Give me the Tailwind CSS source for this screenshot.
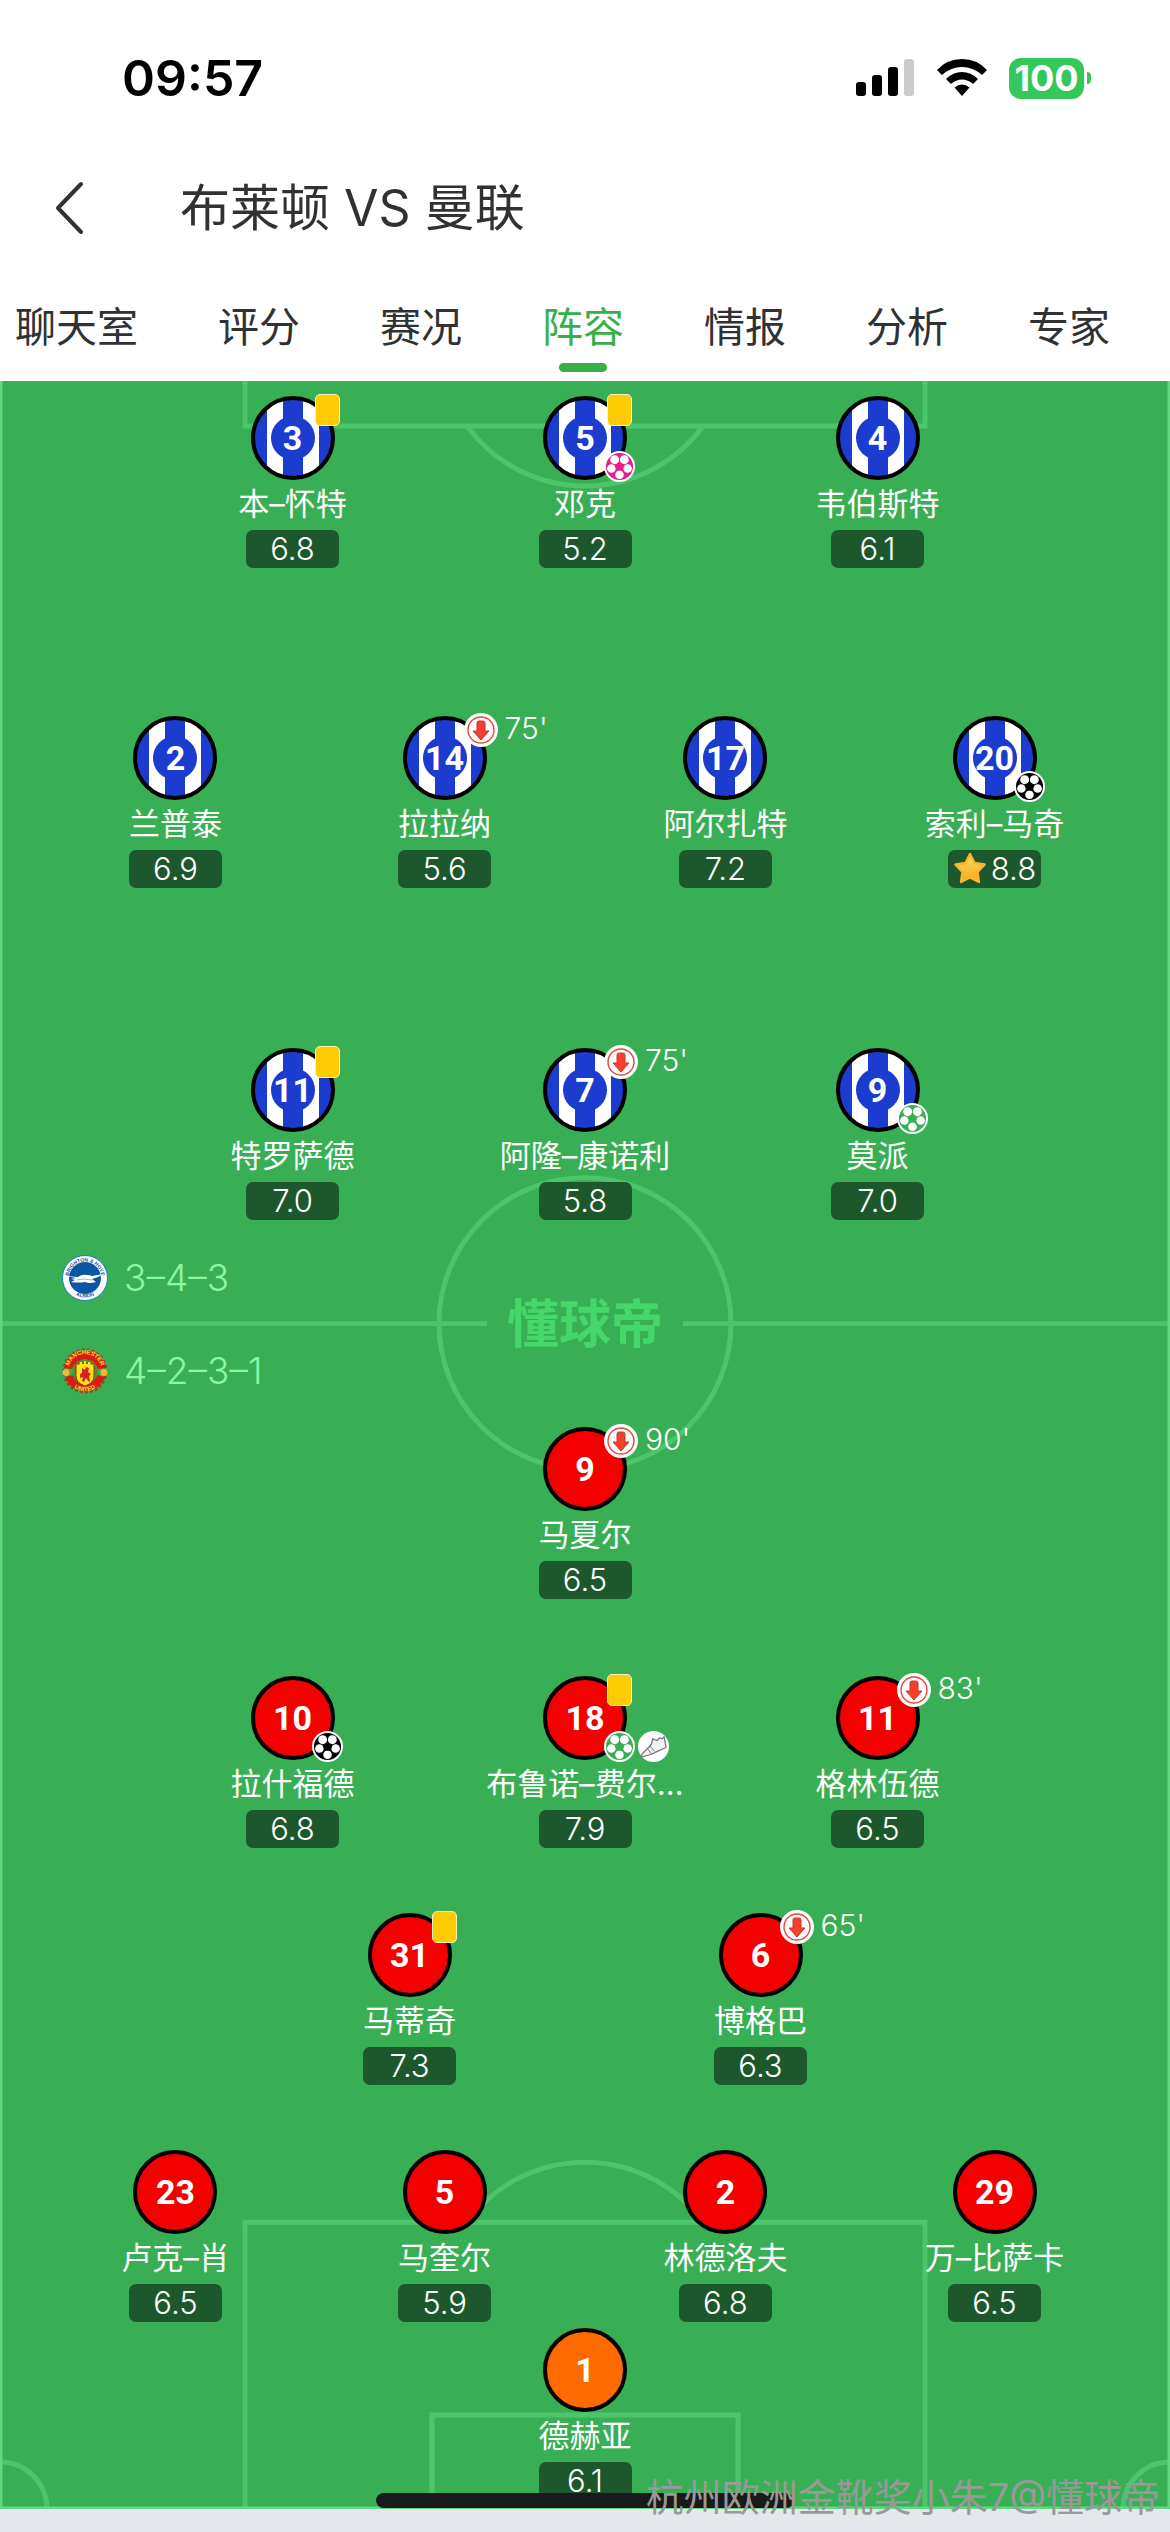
<!DOCTYPE html>
<html lang="zh-CN">
<head>
    <meta charset="UTF-8">
    <meta name="viewport" content="width=device-width, initial-scale=1.0">
    <title>布莱顿 VS 曼联</title>
    <script src="https://cdn.jsdelivr.net/npm/@tailwindcss/browser@4"></script>
</head>
<body class="relative min-h-screen flex flex-col bg-[#e4e7eb] font-['Inter','Noto_Sans_CJK_SC',sans-serif] text-[#303133]">
    <!-- icons shared by the players -->
    <svg class="absolute w-0 h-0">
        <defs>
            <linearGradient id="gold" x1="0" y1="0" x2="0" y2="1">
                <stop offset="0" stop-color="#ffe05c"/>
                <stop offset="1" stop-color="#f9a61d"/>
            </linearGradient>
        </defs>
        <symbol id="ball" viewBox="0 0 32 32">
            <circle cx="16" cy="16" r="15" fill="currentColor" stroke="#fff" stroke-width="2"/>
            <g fill="#fff">
                <circle cx="11" cy="9" r="4.6"/>
                <circle cx="21" cy="9" r="4.6"/>
                <circle cx="24.4" cy="18" r="4.4"/>
                <circle cx="7.6" cy="18" r="4.4"/>
                <circle cx="16" cy="24.6" r="4.4"/>
            </g>
            <path d="M16 11.5l4.6 3.4-1.8 5.3h-5.6l-1.8-5.3z" fill="currentColor"/>
        </symbol>
        <symbol id="boot" viewBox="0 0 32 32">
            <circle cx="16" cy="16" r="16" fill="#fff"/>
            <path d="M15 8l5 2 2-3 3 1 2-2 2 11-9 4-6 3-11 3q0-2 2-4l7-7q3-3 3-8z" fill="#f3f3f3" stroke="#77777c" stroke-width="1.3" stroke-linejoin="round"/>
            <path d="M9 17l5 7M12 15l5 6" fill="none" stroke="#77777c" stroke-width="1"/>
        </symbol>
        <symbol id="off" viewBox="0 0 34 34">
            <circle cx="17" cy="17" r="17" fill="#fff"/>
            <circle cx="17" cy="17" r="13" fill="none" stroke="#e34a3c" stroke-width="1.4"/>
            <path d="M13 10q0-2 2-2h4q2 0 2 2v8h4l-8 9-8-9h4z" fill="#f6402c" stroke="#c9372a" stroke-width="1" stroke-linejoin="round"/>
        </symbol>
        <symbol id="star" viewBox="0 0 34 34">
            <path d="M17 3l4.500 9 10 1.600-7 7.200 1.400 10.200-8.900-4.500-8.900 4.500 1.400-10.200-7-7.200 10-1.600z" fill="url(#gold)" stroke="#f9b52c" stroke-width="2.500" stroke-linejoin="round"/>
        </symbol>
        <symbol id="stripes" viewBox="0 0 84 84">
            <circle cx="42" cy="42" r="40" fill="#fff"/>
            <path d="M16 11v62a40 40 0 0 1 0-62zM68 11v62a40 40 0 0 0 0-62zM32 2h20v80h-20z" fill="#1b3ccf"/>
            <circle cx="42" cy="42" r="22" fill="#1b3ccf"/>
            <circle cx="42" cy="42" r="40" fill="none" stroke="#000" stroke-width="4"/>
        </symbol>
        <symbol id="red" viewBox="0 0 84 84">
            <circle cx="42" cy="42" r="40" fill="#f50000" stroke="#000" stroke-width="4"/>
        </symbol>
        <symbol id="orange" viewBox="0 0 84 84">
            <circle cx="42" cy="42" r="40" fill="#ff6a00" stroke="#000" stroke-width="4"/>
        </symbol>
    </svg>

    <header class="bg-white">
        <div class="flex items-center justify-between h-[156px] pl-[122px] pr-[79px]">
            <time class="text-[50px] leading-none font-semibold text-black">09:57</time>
            <div class="flex items-center">
                <svg class="w-[58px] h-[38px]" viewBox="0 0 58 38">
                    <rect y="23" width="10" height="14" rx="3"/>
                    <rect x="16" y="16" width="10" height="21" rx="3"/>
                    <rect x="32" y="8" width="10" height="29" rx="3"/>
                    <rect x="48" width="10" height="37" rx="3" fill="#cbcbcb"/>
                </svg>
                <svg class="w-[50px] h-[38px] ml-[23px]" viewBox="0 0 50 38">
                    <path d="M0 11Q10 0 25 0T50 11l-5 5Q36 8 25 8T5 16z"/>
                    <path d="M9 20Q16 13 25 13T41 20l-5 5Q31 20.500 25 20.500T14 25z"/>
                    <path d="M17.500 28.500Q21 25.500 25 25.500t7.500 3L25 37z"/>
                </svg>
                <div class="flex items-center justify-center w-[75px] h-[41px] ml-[22px] rounded-[12px] bg-[#34c759] text-[36px] leading-none font-bold text-white">100</div>
                <div class="w-1 h-3 ml-[3px] rounded-r-full bg-[#34c759]"></div>
            </div>
        </div>
        <div class="flex items-center h-[104px] pl-[54px]">
            <button type="button" aria-label="返回">
                <svg class="w-[30px] h-[54px]" viewBox="0 0 30 54" fill="none" stroke="#303133" stroke-width="4" stroke-linecap="round" stroke-linejoin="round"><path d="M27 3L4 27l23 24"/></svg>
            </button>
            <h1 class="ml-[96px] text-[50px] leading-none">布莱顿 VS 曼联</h1>
        </div>
        <nav class="flex gap-[80px] h-[121px] pl-[15px] overflow-hidden whitespace-nowrap text-[41px] leading-[60px]">
            <a href="#" class="pt-[37px]">聊天室</a>
            <a href="#" class="pt-[37px]">评分</a>
            <a href="#" class="pt-[37px]">赛况</a>
            <a href="#" class="flex flex-col items-center pt-[37px] text-[#37b048]">阵容<span class="w-12 h-[9px] mt-[6px] rounded-full bg-[#37b048]"></span></a>
            <a href="#" class="pt-[37px]">情报</a>
            <a href="#" class="pt-[37px]">分析</a>
            <a href="#" class="pt-[37px]">专家</a>
        </nav>
    </header>

    <main class="relative pt-[15px] pb-[9px] bg-[#38af54] text-white overflow-hidden">
        <!-- pitch markings -->
        <svg class="absolute inset-0 w-full h-full" viewBox="0 0 1170 2129" preserveAspectRatio="none" fill="none" stroke="#4dc56b" stroke-width="5">
            <path d="M245 0V45H925V0M467 45A146 146 0 0 0 703 45"/>
            <path d="M0 943H487M683 943H1170"/>
            <circle cx="585" cy="943" r="146"/>
            <path d="M245 2129V1842H925V2129M467 1842A146 146 0 0 1 703 1842M432 2129V2035H738V2129"/>
            <path d="M0 2082A47 47 0 0 1 47 2129M1170 2082A47 47 0 0 0 1123 2129"/>
            <path d="M1 0V2128H1169V0" stroke="#62d881" stroke-width="3"/>
        </svg>

        <ul data-line="0" class="relative grid grid-cols-3 px-[12.5%]"></ul>
        <ul data-line="1" class="relative grid grid-cols-[22fr_24fr_24fr_22fr] px-[4%] mt-[148px]"></ul>
        <ul data-line="2" class="relative grid grid-cols-3 px-[12.5%] mt-[160px]"></ul>

        <section class="relative flex flex-col gap-[47px] mt-[35px] mb-[33px] pl-[62px] text-[37px] leading-[46px] font-light text-[#8df7a4]">
            <div class="flex items-center gap-[16px]">
                <svg class="w-[46px] h-[46px]" viewBox="0 0 46 46">
                    <defs>
                        <path id="bhaTop" d="M6.500 23a16.500 16.500 0 0 1 33 0"/>
                        <path id="bhaBottom" d="M3.500 23a19.500 19.500 0 0 0 39 0"/>
                    </defs>
                    <circle cx="23" cy="23" r="22.500" fill="#fff" stroke="#2a78bd" stroke-width="1"/>
                    <circle cx="23" cy="23" r="16" fill="#0a56a5"/>
                    <g fill="#0a56a5" font-family="Liberation Sans" font-size="5" font-weight="700" text-anchor="middle">
                        <text><textPath href="#bhaTop" startOffset="50%">BRIGHTON &amp; HOVE</textPath></text>
                        <text><textPath href="#bhaBottom" startOffset="50%">ALBION</textPath></text>
                    </g>
                    <path d="M2 20q7 2 14 2 4-3 9-2 3 0 5 1l11-2q-5 4-11 5l4 3q-6 2-11 0-7 1-14 0l4-2-4-1 5-1q-7-1-12-3z" fill="#fff"/>
                    <path d="M15 25q7-2 15 0" fill="none" stroke="#8ab8e4" stroke-width="1"/>
                </svg>
                <p>3–4–3</p>
            </div>
            <div class="flex items-center gap-[16px]">
                <svg class="w-[46px] h-[46px]" viewBox="0 0 46 46">
                    <defs>
                        <path id="munTop" d="M6.500 22.500a16.500 16.500 0 0 1 33 0"/>
                        <path id="munBottom" d="M3 23a20 20 0 0 0 40 0"/>
                    </defs>
                    <circle cx="23" cy="23" r="21" fill="none" stroke="#a4401c" stroke-width="3" stroke-dasharray="3 2"/>
                    <path d="M2 20A21.500 21.500 0 0 1 44 20L36 21A13.500 13.500 0 0 0 10 21zM3 29A21.500 21.500 0 0 0 43 29L35 27A13.500 13.500 0 0 1 11 27z" fill="#dc1a14"/>
                    <circle cx="23" cy="24" r="12.500" fill="#5a8a2c"/>
                    <circle cx="4" cy="24.500" r="3.500" fill="#f6b62d"/>
                    <circle cx="42" cy="24.500" r="3.500" fill="#f6b62d"/>
                    <path d="M14 16h18v12q0 7-9 10-9-3-9-10z" fill="#ffe11a" stroke="#8f3513" stroke-width="1"/>
                    <path d="M17 18l1-4h2v2h2v-3h2v3h2v-2h2l1 4z" fill="#ffe11a"/>
                    <path d="M20 20l3 2 1-3 3 1-1 4 3 2-2 2 1 6-2-1-2-3-2 4-2-1 1-4-3 1v-4l2-1z" fill="#d8231a"/>
                    <g fill="#ffdf1a" font-family="Liberation Sans" font-size="6" font-weight="700" text-anchor="middle">
                        <text><textPath href="#munTop" startOffset="50%">MANCHESTER</textPath></text>
                        <text><textPath href="#munBottom" startOffset="50%">UNITED</textPath></text>
                    </g>
                </svg>
                <p>4–2–3–1</p>
            </div>
            <p class="absolute inset-0 flex items-center justify-center text-[52px] leading-none font-bold text-[#46d76b]">懂球帝</p>
        </section>

        <ul data-line="3" class="relative grid grid-cols-1"></ul>
        <ul data-line="4" class="relative grid grid-cols-3 px-[12.5%] mt-[77px]"></ul>
        <ul data-line="5" class="relative grid grid-cols-2 px-[20%] mt-[65px]"></ul>
        <ul data-line="6" class="relative grid grid-cols-[22fr_24fr_24fr_22fr] px-[4%] mt-[65px]"></ul>
        <ul data-line="7" class="relative grid grid-cols-1 mt-[6px]"></ul>
    </main>

    <!-- home indicator and author mark, over the end of the pitch -->
    <div class="absolute bottom-6 inset-x-0 mx-auto w-[418px] h-[15px] rounded-full bg-[#1a1a1a]"></div>
    <p class="absolute bottom-[8px] right-[10px] text-[38px] leading-[54px] text-[#999]">杭州欧洲金靴奖小朱7@懂球帝</p>

    <script>
        const lines = [
            [
                { no: 3, name: "本–怀特", score: "6.8", kit: "stripes", card: true },
                { no: 5, name: "邓克", score: "5.2", kit: "stripes", card: true, ball: "text-[#ea1d8c]" },
                { no: 4, name: "韦伯斯特", score: "6.1", kit: "stripes" },
            ],
            [
                { no: 2, name: "兰普泰", score: "6.9", kit: "stripes" },
                { no: 14, name: "拉拉纳", score: "5.6", kit: "stripes", off: "75'" },
                { no: 17, name: "阿尔扎特", score: "7.2", kit: "stripes" },
                { no: 20, name: "索利–马奇", score: "8.8", kit: "stripes", ball: "text-black", star: true },
            ],
            [
                { no: 11, name: "特罗萨德", score: "7.0", kit: "stripes", card: true },
                { no: 7, name: "阿隆–康诺利", score: "5.8", kit: "stripes", off: "75'" },
                { no: 9, name: "莫派", score: "7.0", kit: "stripes", ball: "text-[#38af54]" },
            ],
            [
                { no: 9, name: "马夏尔", score: "6.5", kit: "red", off: "90'" },
            ],
            [
                { no: 10, name: "拉什福德", score: "6.8", kit: "red", ball: "text-black" },
                { no: 18, name: "布鲁诺–费尔…", score: "7.9", kit: "red", card: true, ball: "text-[#38af54]", boot: true },
                { no: 11, name: "格林伍德", score: "6.5", kit: "red", off: "83'" },
            ],
            [
                { no: 31, name: "马蒂奇", score: "7.3", kit: "red", card: true },
                { no: 6, name: "博格巴", score: "6.3", kit: "red", off: "65'" },
            ],
            [
                { no: 23, name: "卢克–肖", score: "6.5", kit: "red" },
                { no: 5, name: "马奎尔", score: "5.9", kit: "red" },
                { no: 2, name: "林德洛夫", score: "6.8", kit: "red" },
                { no: 29, name: "万–比萨卡", score: "6.5", kit: "red" },
            ],
            [
                { no: 1, name: "德赫亚", score: "6.1", kit: "orange" },
            ],
        ];

        function player(p) {
            const card = p.card ? '<span class="absolute left-[64px] -top-[2px] w-[25px] h-8 rounded-[5px] border border-[#fff0b3] bg-[#ffcb05]"></span>' : "";
            const off = p.off ? `<span class="absolute left-[61px] -top-[3px] flex items-start gap-[7px] text-[30px] leading-[30px] font-light"><svg class="w-[34px] h-[34px]"><use href="#off"/></svg>${p.off}</span>` : "";
            const ball = p.ball ? `<svg class="w-[31px] h-[31px] ${p.ball}"><use href="#ball"/></svg>` : "";
            const boot = p.boot ? '<svg class="w-[31px] h-[31px]"><use href="#boot"/></svg>' : "";
            const star = p.star ? '<svg class="w-[34px] h-[34px]"><use href="#star"/></svg>' : "";
            return `
                <li class="flex flex-col items-center min-w-0">
                    <div class="relative w-[84px] h-[84px]">
                        <svg class="absolute inset-0 w-full h-full"><use href="#${p.kit}"/></svg>
                        <span class="relative flex items-center justify-center h-full font-['Roboto'] text-[34px] leading-none font-bold">${p.no}</span>
                        ${card}${off}
                        <span class="absolute left-[61px] top-[55px] flex gap-[3px]">${ball}${boot}</span>
                    </div>
                    <p class="mt-1 text-[31px] leading-[40px] whitespace-nowrap">${p.name}</p>
                    <p class="flex items-center justify-center gap-1 w-[93px] h-[38px] pb-[2px] mt-[6px] rounded-[7px] bg-[#1c582b] text-[31px] leading-none font-light">${star}${p.score}</p>
                </li>`;
        }

        document.querySelectorAll("[data-line]").forEach((ul) => {
            ul.innerHTML = lines[ul.dataset.line].map(player).join("");
        });
    </script>
</body>
</html>
